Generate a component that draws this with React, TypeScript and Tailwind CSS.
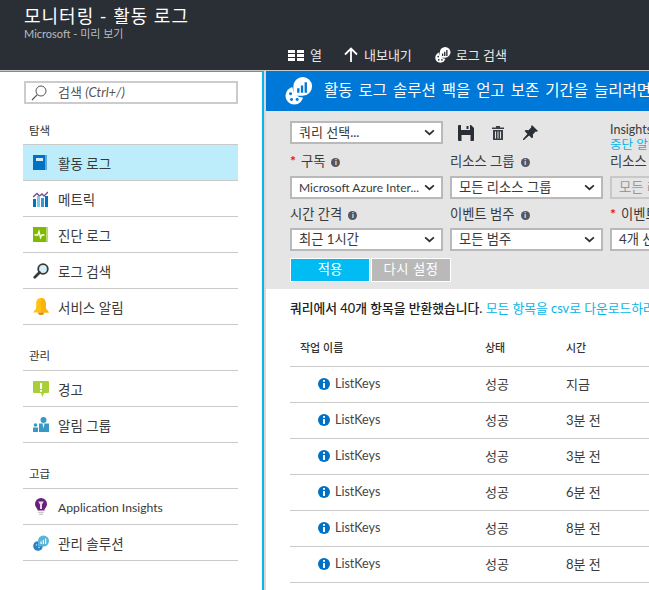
import React from 'react';

const fontStack = { fontFamily: 'Lato, "Noto Sans CJK KR", sans-serif' };

function LogoIcon ({ className, dark = '#0078d7', light = '#fff' }: { className?: string; dark?: string; light?: string }) {
  return (
    <svg viewBox="0 0 30 30" className={className}>
      <circle cx="10" cy="20" r="9.500" fill={light} />
      <circle cx="6" cy="18" r="1.600" fill={dark} />
      <circle cx="11" cy="16" r="1.600" fill={dark} />
      <circle cx="7" cy="24" r="1.600" fill={dark} />
      <circle cx="13" cy="24" r="1.600" fill={dark} />
      <circle cx="19" cy="11" r="11" fill={dark} />
      <path d="M9 10a10 10 0 1 1 10 10H9z" fill={light} />
      <path d="M13 12h2.500v5H13zM17 9h2.500v8H17zM21 5.500h2.500V17H21z" fill={dark} />
    </svg>
  );
}

function ActivityIcon () {
  return (
    <svg viewBox="0 0 14 15" className="h-[15px] w-[14px]">
      <path d="M0 0h14v15H0z" fill="#0072c6" />
      <path d="M12 0h2v15h-2z" fill="#5ea8dc" />
      <path d="M3 3h7v3H3z" fill="#d6ecf8" />
    </svg>
  );
}

function MetricIcon () {
  return (
    <svg viewBox="0 0 15 17" className="h-[17px] w-[15px]">
      <path d="M0 7l4-3.500 2.500 2.500L9 4l2 2 4-4" fill="none" stroke="#804998" strokeWidth="1.400" />
      <path d="M0 9h3v8H0z" fill="#0072c6" />
      <path d="M4 6h3v11H4z" fill="#7fc7e8" />
      <path d="M8 8h3v9H8z" fill="#3999c6" />
      <path d="M12 6h3v11h-3z" fill="#0072c6" />
    </svg>
  );
}

function DiagnosticIcon () {
  return (
    <svg viewBox="0 0 15 15" className="h-[15px] w-[15px]">
      <path d="M0 0h13v15H0z" fill="#7fba00" />
      <path d="M13 0h2v15h-2z" fill="#b8d878" />
      <path d="M1.500 8h3.200l1.300-3.500 1.500 6 1.300-2.500h2.700" fill="none" stroke="#fff" strokeWidth="1.400" />
    </svg>
  );
}

function SearchLogIcon () {
  return (
    <svg viewBox="0 0 16 16" className="h-[16px] w-[16px]">
      <circle cx="10" cy="6" r="4.800" fill="#d4eefa" stroke="#3a3a3a" strokeWidth="1.800" />
      <path d="M6.500 9.500L1.800 14.200" stroke="#3a3a3a" strokeWidth="2.800" strokeLinecap="round" />
    </svg>
  );
}

function BellIcon () {
  return (
    <svg viewBox="0 0 16 17" className="h-[17px] w-[16px]">
      <path d="M8 0c3 0 4.800 2.200 4.800 5.500v5L16 14.500H0l3.200-4v-5C3.200 2.200 5 0 8 0z" fill="#ffc20e" />
      <path d="M8 0c3 0 4.800 2.200 4.800 5.500v5L16 14.500H8z" fill="#fdb10f" />
      <path d="M5 14.500h6a3 2.500 0 0 1-6 0z" fill="#e8850c" />
    </svg>
  );
}

function AlertIcon () {
  return (
    <svg viewBox="0 0 16 16" className="h-[16px] w-[16px]">
      <path d="M1 0h14a1 1 0 0 1 1 1v10a1 1 0 0 1-1 1h-4l-1.500 4L8 12H1a1 1 0 0 1-1-1V1a1 1 0 0 1 1-1z" fill="#a9cf38" />
      <path d="M7 2h2v6H7zM7 9h2v1.800H7z" fill="#fff" />
    </svg>
  );
}

function GroupIcon () {
  return (
    <svg viewBox="0 0 16 15" className="h-[15px] w-[16px]">
      <circle cx="10.500" cy="3" r="3" fill="#3999c6" />
      <path d="M6 6.500h10V15H6z" fill="#3999c6" />
      <path d="M9.500 6.500h2l-1 5z" fill="#fff" />
      <circle cx="2.500" cy="8" r="1.800" fill="#3999c6" />
      <path d="M0 10.500h5V15H0z" fill="#3999c6" />
    </svg>
  );
}

function InsightsIcon () {
  return (
    <svg viewBox="0 0 12 18" className="ml-[2px] h-[18px] w-[12px]">
      <path d="M6 0a6 6 0 0 1 6 6c0 2.500-1.600 3.800-2.500 5.500v1h-7v-1C1.600 9.800 0 8.500 0 6a6 6 0 0 1 6-6z" fill="#68217a" />
      <path d="M3.200 3.500h5.600L7 6.500V11H5V6.500z" fill="#e8dcec" />
      <path d="M3 13.700h6v1H3zM4 15.700h4v1H4z" fill="#bbb" />
    </svg>
  );
}

function SolutionIcon () {
  return (
    <svg viewBox="0 0 16 16" className="h-[16px] w-[16px]">
      <circle cx="5" cy="11" r="4.800" fill="#2a7fc9" />
      <circle cx="3.500" cy="10" r="0.800" fill="#cde" />
      <circle cx="6" cy="12.500" r="0.800" fill="#cde" />
      <path d="M5 6a5.500 5.500 0 1 1 5.500 5.500H5z" fill="#59b4d9" />
      <path d="M7.500 6.500h1.200v2.500H7.500zM9.800 5h1.200v4H9.800zM12 3.500h1.200V9H12z" fill="#fff" />
    </svg>
  );
}

function ChevronIcon () {
  return (
    <svg viewBox="0 0 12 8" className="h-[7px] w-[11px] shrink-0">
      <path d="M1 1.500L6 6l5-4.500" fill="none" stroke="#2a2f35" strokeWidth="2" />
    </svg>
  );
}

function InfoDot () {
  return (
    <span className="flex h-[9px] w-[9px] items-center justify-center rounded-full bg-[#55555f] text-[7px] font-bold leading-none text-white">i</span>
  );
}

function InfoBlue () {
  return (
    <svg viewBox="0 0 12 12" className="h-[12px] w-[12px] shrink-0">
      <circle cx="6" cy="6" r="6" fill="#0072c6" />
      <path d="M5 2h2v1.700H5zM5 5h2v5H5z" fill="#fff" />
    </svg>
  );
}

const navGroups = [
  {
    title: '탐색',
    titleClass: 'h-[41px] pt-[20px]',
    items: [
      { label: '활동 로그', icon: <ActivityIcon />, active: true },
      { label: '메트릭', icon: <MetricIcon /> },
      { label: '진단 로그', icon: <DiagnosticIcon /> },
      { label: '로그 검색', icon: <SearchLogIcon /> },
      { label: '서비스 알림', icon: <BellIcon /> },
    ],
  },
  {
    title: '관리',
    titleClass: 'h-[46px] pt-[24px]',
    items: [
      { label: '경고', icon: <AlertIcon /> },
      { label: '알림 그룹', icon: <GroupIcon /> },
    ],
  },
  {
    title: '고급',
    titleClass: 'h-[46px] pt-[24px]',
    items: [
      { label: 'Application Insights', icon: <InsightsIcon />, latin: true },
      { label: '관리 솔루션', icon: <SolutionIcon /> },
    ],
  },
];

const rows = [
  { status: '성공', time: '지금' },
  { status: '성공', time: '3분 전' },
  { status: '성공', time: '3분 전' },
  { status: '성공', time: '6분 전' },
  { status: '성공', time: '8분 전' },
  { status: '성공', time: '8분 전' },
];

function Select ({ value, className, disabled }: { value: string; className: string; disabled?: boolean }) {
  return (
    <div className={`flex h-[23px] shrink-0 items-center justify-between border-2 pl-[7px] pr-[6px] text-[13.300px] ${disabled ? 'border-[#c8c8c8] bg-[#e5e5e5] text-[#999]' : 'border-[#b9b9b9] bg-white text-[#3a3a3a]'} ${className}`}>
      <span className="whitespace-nowrap">{value}</span>
      {!disabled && <ChevronIcon />}
    </div>
  );
}

function FieldLabel ({ text, required, info = true, className }: { text: string; required?: boolean; info?: boolean; className: string }) {
  return (
    <div className={`flex h-[16px] shrink-0 items-center gap-[6px] whitespace-nowrap text-[13.300px] text-[#3a3a3a] ${className}`}>
      {required && <span className="-mr-[1px] mb-[3px] text-[14px] font-bold leading-none text-[#e81123]">*</span>}
      <span>{text}</span>
      {info && <InfoDot />}
    </div>
  );
}

export default function App () {
  return (
    <div className="flex h-[590px] w-[649px] flex-col overflow-hidden bg-white" style={fontStack}>
      <header className="flex h-[70px] shrink-0 bg-[#2a2f35] text-white">
        <div className="w-[266px] shrink-0 pl-[24px] pt-[6px]">
          <div className="text-[18px] leading-[20px] tracking-[1px]">모니터링 - 활동 로그</div>
          <div className="mt-[2px] text-[11px] leading-[12px] text-[#b8bcc0]">Microsoft - 미리 보기</div>
        </div>
        <div className="flex flex-1 items-start pl-[22px] pt-[47px] text-[13px] leading-[16px] text-[#e8e8e8]">
          <div className="flex items-center gap-[6px]">
            <svg viewBox="0 0 16 11" className="h-[11px] w-[16px]">
              <path d="M0 0h7v3H0zM9 0h7v3H9zM0 4h7v3H0zM9 4h7v3H9zM0 8h7v3H0zM9 8h7v3H9z" fill="#fff" />
            </svg>
            <span>열</span>
          </div>
          <div className="ml-[22px] flex items-center gap-[6px]">
            <svg viewBox="0 0 14 16" className="h-[16px] w-[14px]">
              <path d="M7 15V1.500M1 7.500l6-6 6 6" fill="none" stroke="#fff" strokeWidth="1.800" />
            </svg>
            <span>내보내기</span>
          </div>
          <div className="ml-[23px] flex items-center gap-[5px]">
            <LogoIcon className="h-[16px] w-[16px]" dark="#2a2f35" />
            <span>로그 검색</span>
          </div>
        </div>
      </header>

      <div className="flex min-h-0 flex-1 border-t border-t-[#c8c8c8]">
        <aside className="w-[264px] shrink-0 border-r-2 border-t border-r-[#0ab4e8] border-t-[#0ab4e8] pl-[23px] pr-[24px]">
          <div className="ml-[1px] mt-[9px] flex h-[23px] items-center gap-[11px] border-2 border-[#cccccc] pl-[5px] text-[13px] text-[#555]">
            <svg viewBox="0 0 16 16" className="h-[16px] w-[16px]">
              <circle cx="10" cy="6" r="5" fill="none" stroke="#555" strokeWidth="1" />
              <path d="M6.300 9.700L1 15" stroke="#555" strokeWidth="1.200" />
            </svg>
            <span>검색 <span className="italic">(Ctrl+/)</span></span>
          </div>
          {navGroups.map(group => (
            <div key={group.title}>
              <div className={`border-b border-[#cacaca] pl-[6px] text-[11.500px] leading-[14px] text-[#333] ${group.titleClass}`}>{group.title}</div>
              {group.items.map(item => (
                <div
                  key={item.label}
                  className={`flex h-[36px] items-center border-b border-[#cacaca] text-[#3a3a3a] ${item.latin ? 'text-[12.200px]' : 'text-[13.500px]'} ${item.active ? 'bg-[#bdedfb]' : ''}`}
                >
                  <span className="flex w-[35px] shrink-0 pl-[10px]">{item.icon}</span>
                  <span className="pt-[4px]">{item.label}</span>
                </div>
              ))}
            </div>
          ))}
        </aside>

        <main className="min-w-0 flex-1 overflow-hidden border-l-2 border-l-[#d8d8d8]">
          <div className="flex h-[40px] items-center gap-[11px] whitespace-nowrap bg-[#0078d7] pl-[19px] text-[15.500px] [word-spacing:2px] text-white">
            <LogoIcon className="h-[28px] w-[28px] shrink-0" />
            <span>활동 로그 솔루션 팩을 얻고 보존 기간을 늘리려면 여기를 클릭하세요</span>
          </div>

          <section className="h-[178px] bg-[#e5e5e5] pl-[24px] pt-[10px]">
            <div className="flex h-[23px] items-center">
              <Select value="쿼리 선택..." className="w-[153px] !text-[13px]" />
              <svg viewBox="0 0 16 16" className="ml-[15px] h-[16px] w-[16px] shrink-0">
                <path d="M1 0h12l3 3v12a1 1 0 0 1-1 1H1a1 1 0 0 1-1-1V1a1 1 0 0 1 1-1z" fill="#2a2f35" />
                <path d="M3 0h9v5H3zM3.500 10h9v6h-9z" fill="#e5e5e5" />
                <path d="M8.500 1h2v3h-2z" fill="#2a2f35" />
              </svg>
              <svg viewBox="0 0 12 14" className="ml-[18px] h-[14px] w-[12px] shrink-0">
                <path d="M4 0h4v1.500h4V3H0V1.500h4zM1 4h10v10H1z" fill="#3a3f45" />
                <path d="M3 5.500h1v7H3zM5.500 5.500h1v7h-1zM8 5.500h1v7H8z" fill="#e5e5e5" />
              </svg>
              <svg viewBox="0 0 16 16" className="ml-[19px] h-[15px] w-[15px] shrink-0">
                <path d="M9.500 0L16 6.500l-1.500.8-1-.3-3 3 .2 3-1.200 1.200-3-3L1 16l-1 0 0-1 4.700-5.500-3-3L2.900 5.300l3 .2 3-3-.3-1z" fill="#2a2f35" />
              </svg>
              <div className="ml-[72px] mt-[1px] shrink-0 self-start whitespace-nowrap text-[12.500px] leading-[15px] text-[#3a3a3a]">
                <div>Insights</div>
                <div className="text-[#0ab4e8]">중단 알림</div>
              </div>
            </div>

            <div className="mt-[10px] flex w-[700px]">
              <FieldLabel text="구독" required className="w-[160px]" />
              <FieldLabel text="리소스 그룹" className="w-[160px]" />
              <FieldLabel text="리소스" info={false} className="w-[160px]" />
            </div>
            <div className="mt-[6px] flex w-[700px] gap-[7px]">
              <Select value="Microsoft Azure Inter..." className="w-[153px] !text-[12px]" />
              <Select value="모든 리소스 그룹" className="w-[153px]" />
              <Select value="모든 리소스" className="w-[153px]" disabled />
            </div>

            <div className="mt-[8px] flex w-[700px]">
              <FieldLabel text="시간 간격" className="w-[160px]" />
              <FieldLabel text="이벤트 범주" className="w-[160px]" />
              <FieldLabel text="이벤트 심각도" required className="w-[160px]" />
            </div>
            <div className="mt-[5px] flex w-[700px] gap-[7px]">
              <Select value="최근 1시간" className="w-[153px]" />
              <Select value="모든 범주" className="w-[153px]" />
              <Select value="4개 선택됨" className="w-[153px]" />
            </div>

            <div className="mt-[7px] flex h-[24px] text-[13.300px] text-white">
              <button className="w-[80px] border border-white bg-[#00bcf2] text-center">적용</button>
              <button className="ml-[1px] w-[80px] border border-white bg-[#b9b9b9] text-center tracking-[0.5px]">다시 설정</button>
            </div>
          </section>

          <div className="w-[700px] pl-[24px]">
            <p className="pt-[11px] text-[12.800px] leading-[17px] font-medium text-[#222]">
              쿼리에서 40개 항목을 반환했습니다. <a className="font-normal text-[#0ab4e8]">모든 항목을 csv로 다운로드하려면 클릭하세요</a>
            </p>
            <table className="mt-[10px] w-[480px] table-fixed border-collapse text-[13px] text-[#3a3a3a]">
              <thead>
                <tr className="h-[39px] border-b border-[#cacaca] text-left text-[11px] font-medium text-[#333]">
                  <th className="w-[195px] pl-[10px] pt-[4px] font-medium">작업 이름</th>
                  <th className="w-[81px] pt-[4px] font-medium">상태</th>
                  <th className="pt-[4px] font-medium">시간</th>
                </tr>
              </thead>
              <tbody>
                {rows.map((row, idx) => (
                  <tr key={idx} className="h-[36px] border-b border-[#cacaca]">
                    <td className="pl-[28px]">
                      <div className="flex items-center gap-[5px] text-[12.500px] text-[#444]">
                        <InfoBlue />
                        <span>ListKeys</span>
                      </div>
                    </td>
                    <td className="pt-[2px]">{row.status}</td>
                    <td className="pt-[2px]">{row.time}</td>
                  </tr>
                ))}
              </tbody>
            </table>
          </div>
        </main>
      </div>
    </div>
  );
}
